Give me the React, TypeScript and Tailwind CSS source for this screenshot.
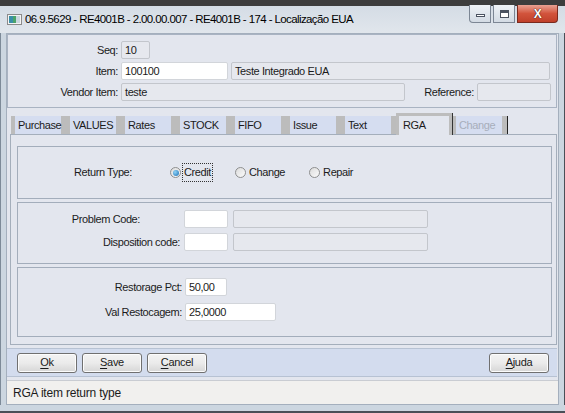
import React from 'react';

const ui = { fontFamily: '"Liberation Sans", Arial, sans-serif' };

function Field({ w, value, ro }: { w: string; value?: string; ro?: boolean }) {
    return (
        <div
            className={`${w} h-[18px] flex items-center px-[3px] text-[11px] text-[#1b1b1b] rounded-[2px] border ${
                ro ? 'bg-[#e6e8ee] border-[#c3c6cc]' : 'bg-white border-[#d2d5da]'
            }`}
        >
            {value}
        </div>
    );
}

function Radio({ label, checked, focus }: { label: string; checked?: boolean; focus?: boolean }) {
    return (
        <div className="flex items-center gap-[2px]">
            <span className="w-[11px] h-[11px] rounded-full border border-[#8e8f8f] bg-gradient-to-br from-[#dcdcdc] to-[#fbfbfb] flex items-center justify-center">
                {checked && <span className="w-[6px] h-[6px] rounded-full bg-[radial-gradient(circle_at_35%_35%,#8fd3f7,#1c6fb4)]" />}
            </span>
            <span className={`px-[1px] ${focus ? 'outline outline-1 outline-dotted outline-[#333]' : ''}`}>{label}</span>
        </div>
    );
}

function Btn({ label, w = 'w-[60px]' }: { label: string; w?: string }) {
    return (
        <button className={`${w} h-[20px] rounded-[3px] border border-[#707070] bg-gradient-to-b from-[#f3f3f3] via-[#ebebeb] to-[#d6d6d6] text-[11px] tracking-[-0.3px] text-[#1b1b1b] shadow-[inset_0_0_0_1px_#fcfcfc]`}>
            <span className="underline underline-offset-2">{label[0]}</span>
            {label.slice(1)}
        </button>
    );
}

const tabs = ['Purchase', 'VALUES', 'Rates', 'STOCK', 'FIFO', 'Issue', 'Text', 'RGA', 'Change'];

export default function App() {
    return (
        <div className="w-[565px] h-[413px] flex flex-col bg-[#c9d3dd] text-[#1b1b1b] overflow-hidden tracking-[-0.4px]" style={ui}>
            {/* caption */}
            <div className="h-[6px] bg-[#3d3d3d]" />
            <div className="h-[27px] relative flex items-center pl-[7px] bg-gradient-to-b from-[#d4dce5] to-[#e1e6ec]">
                <svg width="15" height="11" viewBox="0 0 15 11" className="mr-[3px]">
                    <rect x="0.5" y="0.5" width="14" height="10" fill="#f4f4f4" stroke="#8b8b8b" />
                    <rect x="2" y="2" width="4" height="7" fill="#3a8fa8" />
                    <rect x="6" y="2" width="3" height="7" fill="#4aa36a" />
                    <rect x="9" y="2" width="4" height="7" fill="#c9d6de" />
                </svg>
                <span className="text-[11.5px] text-black tracking-[-0.6px]">
                    06.9.5629 - RE4001B - 2.00.00.007 - RE4001B - 174 - Localização EUA
                </span>
                <div className="absolute top-[-1px] right-[7px] flex gap-[2px]">
                    <div className="w-[22px] h-[18px] rounded-bl-[4px] border border-[#7c8694] border-t-0 bg-gradient-to-b from-[#eef2f6] to-[#d3dbe4] flex items-center justify-center">
                        <span className="w-[9px] h-[3px] mt-[4px] border border-[#4a5260] bg-white" />
                    </div>
                    <div className="w-[22px] h-[18px] border border-[#7c8694] border-t-0 bg-gradient-to-b from-[#eef2f6] to-[#d3dbe4] flex items-center justify-center">
                        <span className="w-[9px] h-[8px] border border-[#4a5260] border-t-[3px] bg-white" />
                    </div>
                    <div className="w-[41px] h-[18px] rounded-br-[4px] border border-[#7a2a1e] border-t-0 bg-gradient-to-b from-[#e8a193] via-[#d2543c] to-[#c0402a] flex items-center justify-center">
                        <span className="text-white font-bold text-[12px] leading-none [text-shadow:0_0_1px_#3a1a14,0_0_1px_#3a1a14]">X</span>
                    </div>
                </div>
            </div>

            <div className="flex-1 flex">
                <div className="w-[6px] border-l border-[#7d8a98] bg-[#ccd6e0]" />
                <div className="flex-1 flex flex-col bg-[#e3e6ee] border border-[#a4afbd]">
                    {/* header */}
                    <div className="h-[74px] mr-[1px] border border-[#a9b3c2] flex flex-col gap-[3px] pt-[6px] text-[11px]">
                        <div className="flex items-center">
                            <span className="w-[110px] text-right mr-[3px]">Seq:</span>
                            <Field w="w-[29px]" value="10" ro />
                        </div>
                        <div className="flex items-center">
                            <span className="w-[110px] text-right mr-[3px]">Item:</span>
                            <Field w="w-[107px]" value="100100" />
                            <div className="w-[3px]" />
                            <Field w="w-[319px]" value="Teste Integrado EUA" ro />
                        </div>
                        <div className="flex items-center">
                            <span className="w-[110px] text-right mr-[3px]">Vendor Item:</span>
                            <Field w="w-[284px]" value="teste" ro />
                            <span className="w-[69px] text-right mr-[3px]">Reference:</span>
                            <Field w="w-[74px]" ro />
                        </div>
                    </div>

                    {/* tab strip */}
                    <div className="ml-[3px] mr-[1px] pt-[5px] flex flex-col">
                        <div className="flex items-end h-[21px] pl-[1px] text-[11px]">
                            {tabs.map(t =>
                                t === 'RGA' ? (
                                    <div key={t} className="w-[56px] h-[22px] -mb-[1px] z-10 bg-[#e3e6ee] border-[3px] border-b-0 border-[#bdbdbd] shadow-[1px_0_0_#333] flex items-center pl-[4px]">
                                        {t}
                                    </div>
                                ) : (
                                    <div
                                        key={t}
                                        className={`w-[55px] h-[18px] bg-[#d5ddf0] border-l-[4px] border-r-[5px] border-[#bcbcbc] shadow-[1px_0_0_#222] flex items-center pl-[3px] ${
                                            t === 'Change' ? 'text-[#a7aebb]' : ''
                                        }`}
                                    >
                                        {t}
                                    </div>
                                )
                            )}
                        </div>
                        <div className="h-[211px] border border-[#a4aebb] pl-[6px] pr-[4px] pt-[11px] flex flex-col gap-[3px] text-[11px]">
                            <div className="h-[53px] border border-[#a3adbb] flex items-center pl-[56px]">
                                <span className="w-[96px]">Return Type:</span>
                                <div className="flex gap-[23px]">
                                    <Radio label="Credit" checked focus />
                                    <Radio label="Change" />
                                    <Radio label="Repair" />
                                </div>
                            </div>
                            <div className="h-[62px] border border-[#a3adbb] flex flex-col gap-[5px] pt-[7px]">
                                <div className="flex items-center">
                                    <span className="w-[122px] text-right mr-[44px]">Problem Code:</span>
                                    <Field w="w-[44px]" />
                                    <div className="w-[5px]" />
                                    <Field w="w-[195px]" ro />
                                </div>
                                <div className="flex items-center">
                                    <span className="w-[162px] text-right mr-[4px]">Disposition code:</span>
                                    <Field w="w-[44px]" />
                                    <div className="w-[5px]" />
                                    <Field w="w-[195px]" ro />
                                </div>
                            </div>
                            <div className="h-[70px] border border-[#a3adbb] flex flex-col gap-[7px] pt-[10px]">
                                <div className="flex items-center">
                                    <span className="w-[164px] text-right mr-[3px]">Restorage Pct:</span>
                                    <Field w="w-[42px]" value="50,00" />
                                </div>
                                <div className="flex items-center">
                                    <span className="w-[164px] text-right mr-[3px]">Val Restocagem:</span>
                                    <Field w="w-[91px]" value="25,0000" />
                                </div>
                            </div>
                        </div>
                    </div>

                    {/* buttons */}
                    <div className="mt-[3px] mr-[1px] h-[29px] bg-[#d3dcee] border-y border-[#b7c2d3] flex items-center pl-[10px] pr-[8px] gap-[5px]">
                        <Btn label="Ok" />
                        <Btn label="Save" />
                        <Btn label="Cancel" />
                        <div className="flex-1" />
                        <Btn label="Ajuda" />
                    </div>

                    {/* status */}
                    <div className="mt-[3px] flex-1 bg-[#f1f0ee] border-t border-[#c9ccd2] flex items-center pl-[6px] text-[12px] tracking-[-0.2px]">
                        RGA item return type
                    </div>
                </div>
                <div className="w-[6px] border-r border-[#4a4f57] bg-[#ccd6e0]" />
            </div>
            <div className="h-[8px] bg-[#ccd6e0] border-b-2 border-[#4a4f57]" />
        </div>
    );
}
